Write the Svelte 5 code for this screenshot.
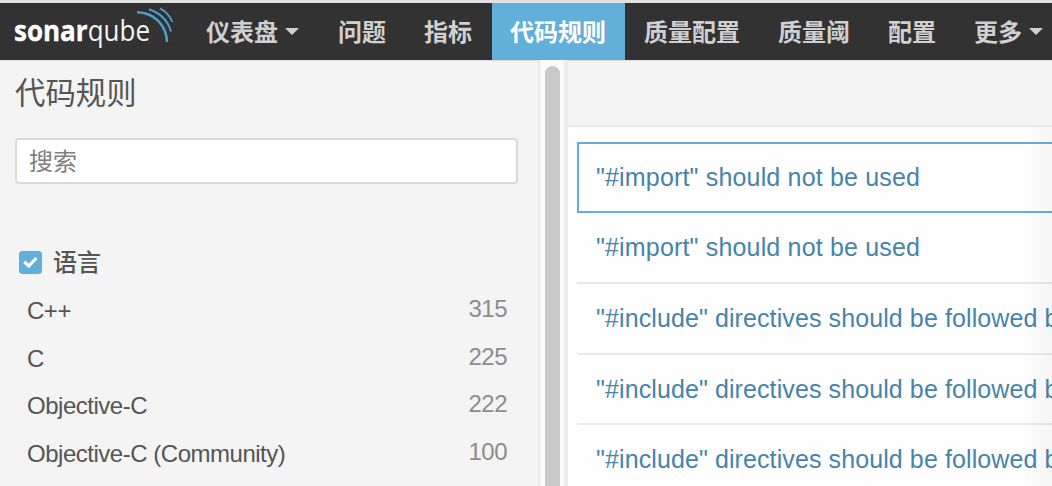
<script>
  const nav = [
    { label: '仪表盘', menu: true },
    { label: '问题' },
    { label: '指标' },
    { label: '代码规则', active: true },
    { label: '质量配置' },
    { label: '质量阈' },
    { label: '配置' },
    { label: '更多', menu: true }
  ];
  const languages = [
    ['C++', 315],
    ['C', 225],
    ['Objective-C', 222],
    ['Objective-C (Community)', 100]
  ];
  const rules = [
    '"#import" should not be used',
    '"#import" should not be used',
    '"#include" directives should be followed by',
    '"#include" directives should be followed by',
    '"#include" directives should be followed by'
  ];
</script>

<div class="page">
  <header>
    <div class="logo">
      <svg width="187" height="57" viewBox="0 3 187 57">
        <text class="wordmark" x="14" y="41" textLength="136" lengthAdjust="spacingAndGlyphs"><tspan class="bold">sonar</tspan>qube</text>
        <g fill="none" stroke="#4b9fc9" stroke-width="2">
          <path d="M137 12.2C154 12.5 166.5 25 167 42" stroke-width="2.6" />
          <path d="M149 9.3C160 13 168 21 171 31.5" />
          <path d="M160 8.4C166 11.5 170 16 172.3 22" stroke-width="1.8" />
        </g>
      </svg>
    </div>
    <nav>
      {#each nav as item}
        <a class="item" class:active={item.active}>
          {item.label}{#if item.menu}<span class="caret"></span>{/if}
        </a>
      {/each}
    </nav>
  </header>

  <div class="body">
    <aside>
      <h1>代码规则</h1>
      <input type="text" placeholder="搜索" />
      <div class="facet-title">
        <svg width="23" height="23" viewBox="0 0 23 23">
          <rect width="23" height="23" rx="3.5" fill="#62b0d9" />
          <path d="M5.2 10.8L9.8 15L17.4 7" fill="none" stroke="#fff" stroke-width="3.2" />
        </svg>
        <span>语言</span>
      </div>
      <ul>
        {#each languages as [name, count]}
          <li><span>{name}</span><span class="count">{count}</span></li>
        {/each}
      </ul>
    </aside>
    <div class="track"><div class="thumb"></div></div>
    <main>
      <div class="toolbar"></div>
      <div class="rules">
        {#each rules as rule, i}
          <div class="rule" class:selected={i === 0}>{rule}</div>
        {/each}
      </div>
      <div class="shade"></div>
    </main>
  </div>
</div>

<style>
  .page {
    width: 1052px;
    height: 486px;
    overflow: hidden;
    display: flex;
    flex-direction: column;
    box-sizing: border-box;
    border-top: 3px solid #e0e0e0;
    background: #f4f4f4;
    color: #555;
    font-family: "Liberation Sans", "Noto Sans CJK SC", sans-serif;
  }
  header {
    display: flex;
    flex: 0 0 57px;
    background: #323232;
  }
  .logo {
    flex: 0 0 187px;
  }
  .logo svg {
    display: block;
  }
  .wordmark {
    font-family: "Open Sans", sans-serif;
    font-size: 28.5px;
    fill: #f4f4f4;
  }
  .bold {
    font-weight: 700;
    fill: #fff;
    stroke: #fff;
    stroke-width: 0.4px;
  }
  nav {
    display: flex;
  }
  .item {
    display: flex;
    align-items: center;
    margin-left: 1px;
    padding: 0 19px 3px 18px;
    color: #d0d0d0;
    font-size: 24px;
    font-weight: 700;
    white-space: nowrap;
  }
  .active {
    background: #62b0d9;
    color: #fff;
  }
  .caret {
    margin: 2px 0 0 7px;
    border: 7px solid transparent;
    border-top-color: #d0d0d0;
    border-bottom: 0;
    margin-right: 1px;
  }
  .body {
    flex: 1;
    display: flex;
    min-height: 0;
  }
  aside {
    box-sizing: border-box;
    flex: 0 0 538px;
    padding: 13px 20px 0 15px;
    border-top: 1px solid #dedede;
  }
  h1 {
    margin: 0;
    font-size: 30.4px;
    line-height: 38px;
    font-weight: 400;
  }
  input {
    display: block;
    box-sizing: border-box;
    width: 503px;
    height: 46px;
    margin: 26px 0 0;
    padding: 2px 12px 0;
    border: 2px solid #d9d9d9;
    border-radius: 4px;
    background: #fff;
    font: 24px "Liberation Sans", "Noto Sans CJK SC", sans-serif;
  }
  input::placeholder {
    color: #808080;
    opacity: 1;
  }
  .facet-title {
    display: flex;
    align-items: center;
    gap: 11px;
    height: 36px;
    margin: 60px 0 0 4px;
    font-size: 24px;
    font-weight: 500;
  }
  .facet-title span {
    margin-top: -3px;
  }
  ul {
    margin: 8px 0 0;
    padding: 0 11px 0 12px;
    list-style: none;
  }
  li {
    display: flex;
    justify-content: space-between;
    height: 47.6px;
    line-height: 46px;
    font-size: 24px;
    letter-spacing: -0.48px;
  }
  .count {
    margin-top: -2px;
    color: #8c8c8c;
  }
  .track {
    box-sizing: border-box;
    flex: 0 0 30px;
    padding: 6px 0 0 5px;
    background: #fafafa;
    border-left: 2px solid #e9e9e9;
    border-right: 4px solid #ececec;
  }
  .thumb {
    width: 15px;
    height: 440px;
    border-radius: 8px;
    background: #c9c9c9;
  }
  main {
    position: relative;
    flex: 1;
    min-width: 0;
    background: #fefefe;
  }
  .toolbar {
    box-sizing: border-box;
    height: 67px;
    background: #f4f4f4;
    border-top: 1px solid #dedede;
    border-bottom: 2px solid #e8e8e8;
  }
  .rules {
    padding: 15px 0 0 9px;
  }
  .rule {
    box-sizing: border-box;
    height: 70.5px;
    padding-left: 19px;
    border-bottom: 2px solid #e9e9e9;
    color: #4684aa;
    font-size: 25px;
    line-height: 68px;
    letter-spacing: 0.17px;
    white-space: nowrap;
    overflow: hidden;
  }
  .selected {
    height: 71px;
    padding-left: 17px;
    border: 2px solid #62b0d9;
    border-right: 0;
    line-height: 67px;
  }
  .rule:nth-child(2) {
    height: 71px;
  }
  .rule:nth-child(n + 3) {
    letter-spacing: 0.1px;
  }
  .shade {
    position: absolute;
    top: 67px;
    right: 0;
    bottom: 0;
    width: 30px;
    background: linear-gradient(to right, transparent, rgba(0, 0, 0, 0.035));
  }
</style>
